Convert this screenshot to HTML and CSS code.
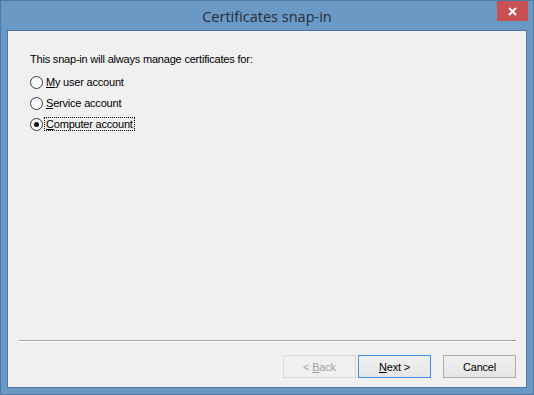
FILE: index.html
```html
<!DOCTYPE html>
<html>
<head lang="en">
    <meta charset="UTF-8">
    <title>Certificates snap-in</title>
    <link rel="stylesheet" href="styles.css">
</head>
<body>
<div class="window">
    <div class="titleBar">
        <span class="titleText">Certificates snap-in</span>
        <div class="closeBtn">
            <svg width="9" height="9" viewBox="0 0 9 9"><path d="M1 1L8 8M8 1L1 8" stroke="#fff" stroke-width="2"/></svg>
        </div>
    </div>
    <div class="client">
        <div class="content">
            <p class="intro">This snap-in will always manage certificates for:</p>
            <label class="radioRow"><span class="radio"></span><span class="radioText"><u>M</u>y user account</span></label>
            <label class="radioRow"><span class="radio"></span><span class="radioText"><u>S</u>ervice account</span></label>
            <label class="radioRow"><span class="radio checked"></span><span class="radioText focus"><u>C</u>omputer account</span></label>
        </div>
        <div class="separator"></div>
        <div class="buttons">
            <div class="btn disabled"><span>&lt; <u>B</u>ack</span></div>
            <div class="btn default"><span><u>N</u>ext &gt;</span></div>
            <div class="btn cancel"><span>Cancel</span></div>
        </div>
    </div>
</div>
</body>
</html>
```

FILE: styles.css
```css
body{
    margin:0;
    font-family:"Liberation Sans", Arial, sans-serif;
}
.window{
    width:532px;height:393px;
    border:1px solid #4f78a2;
    background:#6b99c5;
    display:flex;flex-direction:column;
}
.titleBar{
    height:29px;position:relative;
    display:flex;align-items:center;justify-content:center;
}
.titleText{
    font-family:"Open Sans","Noto Sans",sans-serif;
    font-size:14.5px;color:#262d36;
    margin-top:1px;
}
.closeBtn{
    position:absolute;top:0;right:5px;
    width:31px;height:20px;background:#c75050;
    display:flex;align-items:center;justify-content:center;
}
.client{
    flex:1;margin:0 6px 6px;
    border:1px solid #4f78a2;
    background:#f0f0f0;
    display:flex;flex-direction:column;
    font-size:11px;color:#000;letter-spacing:-0.2px;
}
.content{
    flex:1;padding:22px 0 0 22px;
}
.intro{
    margin:0 0 7px;
}
.radioRow{
    display:flex;align-items:center;height:20px;
    margin-bottom:1px;
}
.radio{
    width:11px;height:11px;border:1px solid #3c3c3c;border-radius:50%;
    background:linear-gradient(#f4f4f4,#ffffff);
    display:flex;align-items:center;justify-content:center;
    margin-right:1px;
}
.radio.checked::after{
    content:"";width:5px;height:5px;border-radius:50%;background:#111;
}
.radioText{
    padding:0 1px;border:1px solid transparent;
}
.radioText.focus{
    border:1px dotted #000;
}
.separator{
    height:0;border-top:1px solid #a0a0a0;border-bottom:1px solid #fff;
    margin:0 10px 0 11px;
}
.buttons{
    display:flex;justify-content:flex-end;
    padding:13px 10px 9px 0;
}
.btn{
    width:71px;height:21px;box-sizing:content-box;
    border:1px solid #acacac;
    background:linear-gradient(#f0f0f0,#e5e5e5);
    display:flex;align-items:center;justify-content:center;
}
.btn.disabled{
    border-color:#d9d9d9;background:#f0f0f0;color:#a0a0a0;
}
.btn.default{
    border-color:#3c8ee4;margin-left:2px;
}
.btn.cancel{
    margin-left:12px;
}
```
